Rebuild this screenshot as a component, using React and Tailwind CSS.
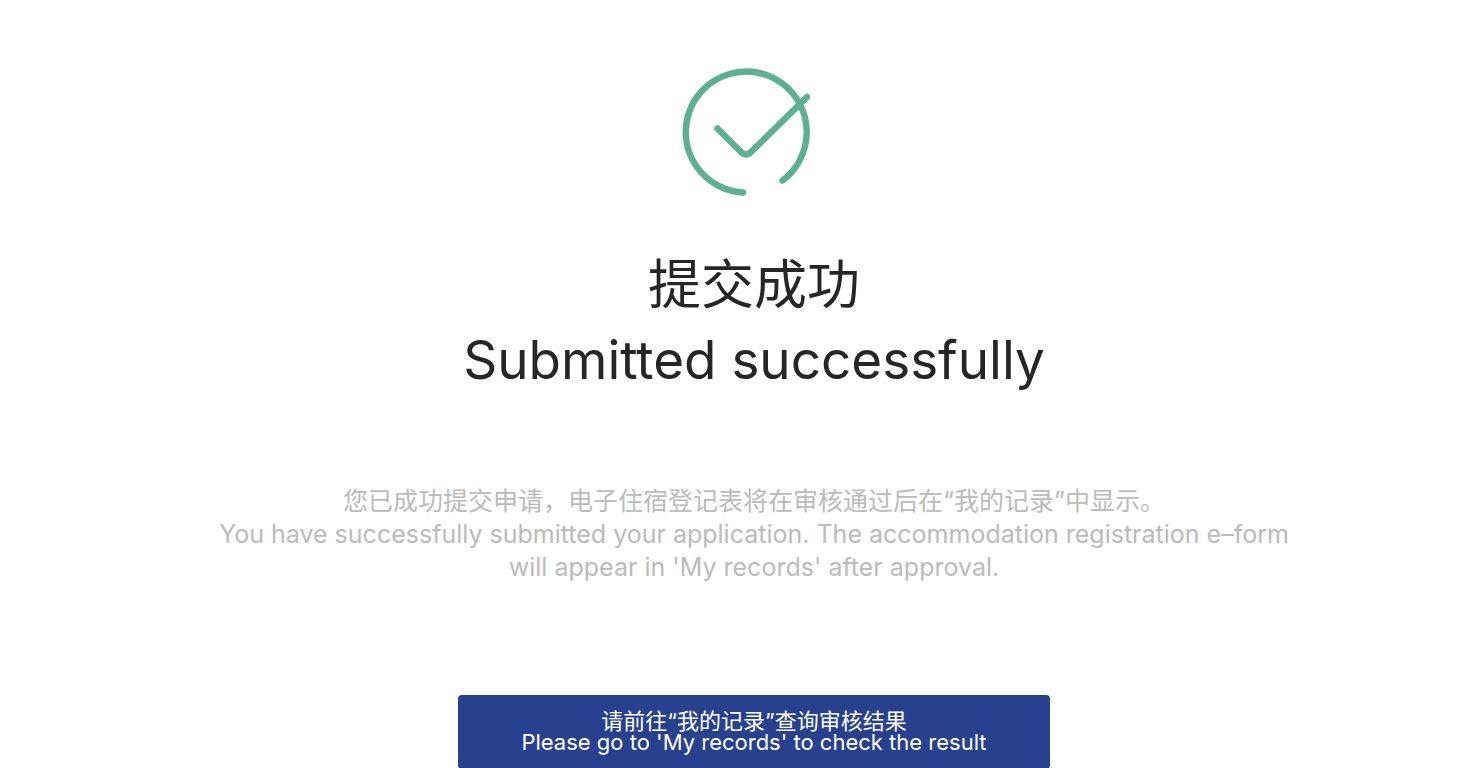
const SuccessIcon = () => (
  <svg
    className="w-32 h-32"
    viewBox="0 0 128 128"
    fill="none"
    stroke="#5bb191"
    strokeWidth="6.400"
    strokeLinecap="round"
    strokeLinejoin="round"
    aria-hidden="true"
  >
    <path d="M61 124.500A60.500 60.500 0 1 1 100.500 112.500" />
    <path d="M35.500 60.500L59.500 84.500Q64 88.500 68.500 84.500L125 29" />
  </svg>
);

const App = () => {
  return (
    <main className="flex flex-col items-center min-h-screen bg-white pt-17 pl-[46px] text-center font-['Inter','Noto_Sans_CJK_SC',sans-serif] [font-feature-settings:'calt'_0]">
      <div className="pr-4">
        <SuccessIcon />
      </div>

      <h1 className="mt-13 text-[53px] leading-[75px] text-[#262626]">
        <span className="block" lang="zh-CN">提交成功</span>
        <span className="block" lang="en">Submitted successfully</span>
      </h1>

      <div className="mt-[87px] text-[25px] leading-[33px] text-[#bbbbbb]">
        <p lang="zh-CN">您已成功提交申请，电子住宿登记表将在审核通过后在“我的记录”中显示。</p>
        <p lang="en">
          You have successfully submitted your application. The accommodation registration e–form
          <br />
          will appear in 'My records' after approval.
        </p>
      </div>

      <button
        type="button"
        className="mt-[111px] w-[592px] max-w-full rounded bg-[#27418e] py-4 text-[22px] leading-[21px] text-white"
      >
        <span className="block" lang="zh-CN">请前往“我的记录”查询审核结果</span>
        <span className="block" lang="en">Please go to 'My records' to check the result</span>
      </button>
    </main>
  );
};

export default App;
